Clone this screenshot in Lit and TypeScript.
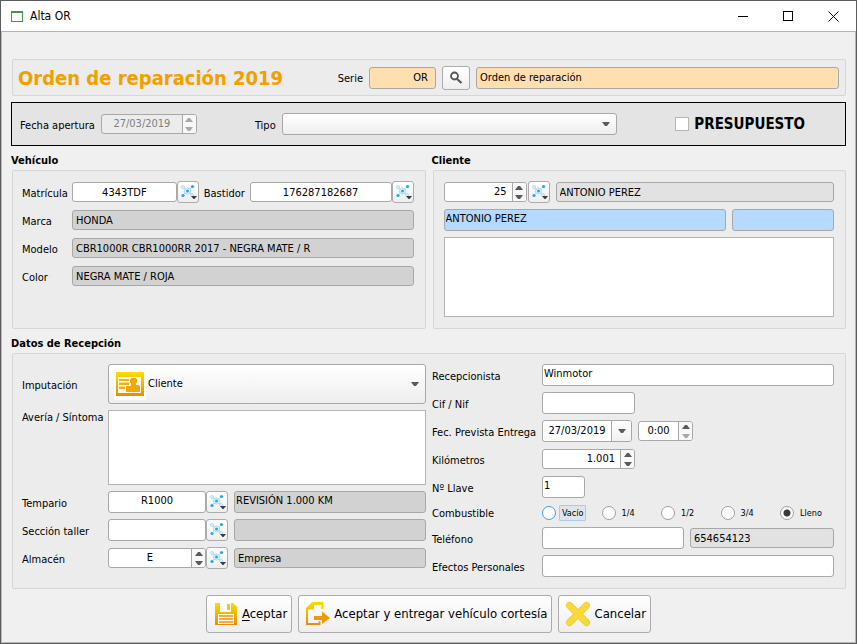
import { LitElement, html, css, svg, nothing } from "lit";
import { customElement, state } from "lit/decorators.js";
import { classMap } from "lit/directives/class-map.js";

const arrowUp = html`<svg class="tri" viewBox="0 0 8 4" aria-hidden="true"><path d="M0 4 L3 0 H5 L8 4 Z" /></svg>`;
const arrowDown = html`<svg class="tri" viewBox="0 0 8 4" aria-hidden="true"><path d="M0 0 H8 L5 4 H3 Z" /></svg>`;

const netIcon = html`<svg class="net" viewBox="0 0 20 20" aria-hidden="true">
  <g fill="none" stroke="#a4daf5" stroke-width="1">
    <path d="M5 5 L14 13 M14 5 L5 13" />
    <circle cx="5" cy="5" r="1.4" fill="#fff" />
    <circle cx="14" cy="13" r="1.4" fill="#fff" />
    <circle cx="9.5" cy="9" r="3" fill="#e4f5fd" />
  </g>
  <g fill="#22aaea">
    <circle cx="9.5" cy="9" r="1.5" />
    <circle cx="14.5" cy="4.5" r="1.6" />
    <circle cx="5" cy="13.5" r="1.6" />
  </g>
  <path d="M13 14 H19 L16.500 17 H15.500 Z" fill="#3c3c3c" />
</svg>`;

const gradient = (id: string) => svg`<linearGradient id=${id} x1="0" y1="0" x2="0" y2="1">
  <stop offset="0" stop-color="#fbdd00" /><stop offset="1" stop-color="#e88a0c" /></linearGradient>`;

const cardIcon = html`<svg class="card-icon" viewBox="0 0 32 32" aria-hidden="true">
  <defs>${gradient("g-card")}</defs>
  <rect width="32" height="32" fill="#fff" />
  <rect x="2" y="4" width="28" height="24" fill="url(#g-card)" />
  <rect x="4" y="9" width="23" height="16" fill="#fffbe6" />
  <path d="M5 11 H15 V13 H5 Z M5 14.500 H15 V17 H5 Z M5 18.500 H11 V21 H5 Z" fill="#efb31a" />
  <path d="M17 10 H22 V11 H23 V15 H22 V17 H25 V18 H26 V24 H12 V18 H17 V15 H16 V11 H17 Z" fill="#f0a812" />
</svg>`;

const saveIcon = html`<svg class="act-icon" viewBox="0 0 26 26" aria-hidden="true">
  <defs>${gradient("g-save")}</defs>
  <path d="M2 2 H7 V11 H18 V2 H20 L24 6 V24 H2 Z" fill="url(#g-save)" />
  <path d="M14 3 H17 V9 H14 Z" fill="#f7c80a" />
  <path d="M5 13 H21 V23 H5 Z" fill="#fffdf2" />
  <path d="M6 14 H20 V16 H6 Z M6 17 H20 V19 H6 Z M6 20 H20 V22 H6 Z" fill="#f0ab3a" />
</svg>`;

const exportIcon = html`<svg class="act-icon" viewBox="0 0 26 26" aria-hidden="true">
  <defs>${gradient("g-exp")}</defs>
  <path fill="url(#g-exp)"
    d="M7 1 H18.500 V8 H16.500 V4 H9 V8.500 H3 V22 H13.500 V20.500 H15.500 V24 H1 V7 Z" />
  <path d="M9 15 H17 V10.500 L25 17 L17 23 V19 H9 Z" fill="#eb9a0c" />
</svg>`;

const crossIcon = html`<svg class="act-icon" viewBox="0 0 26 26" aria-hidden="true">
  <path d="M4.500 4.500 L21.500 21.500 M21.500 4.500 L4.500 21.500" stroke="#e6c436" stroke-width="7" stroke-linecap="round" />
  <path d="M4.500 4.500 L21.500 21.500 M21.500 4.500 L4.500 21.500" stroke="#fad83c" stroke-width="6" stroke-linecap="round" />
</svg>`;

@customElement("app-root")
export class AppRoot extends LitElement {
  @state() private fuel = "Lleno";

  static styles = css`
    :host {
      display: block;
      font-family: "DejaVu Sans Condensed", "DejaVu Sans", sans-serif;
      font-size: 11px;
      line-height: 14px;
      color: #000;
    }
    *, *::before, *::after { box-sizing: border-box; }
    .window {
      min-height: 100vh;
      border: 1px solid #5c5c5c;
      background: #f0f0f0;
      display: flex;
      flex-direction: column;
    }
    .titlebar {
      height: 31px;
      background: #fff;
      border-bottom: 1px solid #b4b4b4;
      display: flex;
      align-items: center;
      padding-left: 10px;
    }
    .titlebar h1 { margin: 0 0 0 7px; flex: 1; font-size: 12px; font-weight: 400; }
    .app-icon { width: 12px; height: 11px; }
    .caption {
      width: 45px; height: 30px; padding: 0; border: 0; background: none;
      display: grid; place-items: center;
    }
    .caption svg { width: 11px; height: 11px; }
    .content {
      flex: 1;
      border: solid #b8b8b8;
      border-width: 0 1px 1px;
      padding: 27px 9px 9px;
    }
    input, select, textarea, button { font: inherit; color: inherit; margin: 0; }
    input:focus, select:focus, textarea:focus { outline: 1px solid #5fb0ee; }
    label, .lbl { padding-top: 4px; white-space: nowrap; }

    .panel {
      border: 1px solid #d6d6d6;
      border-radius: 2px;
      background: #ececec;
      margin-left: 1px;
    }
    .head {
      display: grid;
      grid-template-columns: 314px 25px 67px 28px 1fr;
      column-gap: 6px;
      align-items: center;
      height: 37px;
      padding: 0 6px 0 5px;
    }
    .head h2 { margin: 0; color: #f0a000; font-size: 20px; line-height: 26px; font-weight: 700; white-space: nowrap; }
    .head label { justify-self: end; padding-top: 2px; }
    .filter {
      margin-top: 6px;
      height: 44px;
      border: 1px solid #000;
      background: #e4e4e4;
      display: flex;
      align-items: center;
      padding: 0 40px 0 8px;
    }
    .filter .spin { width: 96px; margin-left: 6px; margin-right: 58px; }
    .filter .combo { flex: 1; margin-left: 6px; }
    .check { display: flex; align-items: center; gap: 5px; padding: 0; margin-left: 58px; font-size: 15px; line-height: 18px; font-weight: 700; }
    .check input { appearance: none; width: 14px; height: 14px; border: 1px solid #b6b6b6; background: #fff; }
    .check input:checked { background: #444; }

    .section { margin: 0; height: 24px; padding: 7px 0 0; font-size: 11px; line-height: 16px; font-weight: 700; }
    .pair { display: grid; grid-template-columns: 1fr 1fr; column-gap: 6px; }
    .col { display: flex; flex-direction: column; }
    .col .panel { flex: 1; }
    .form { padding: 10px 11px 11px 9px; display: grid; row-gap: 6px; align-content: start; }
    .form.client { padding-left: 10px; }
    .row { display: grid; align-items: center; height: 22px; }
    .row.short { height: 17px; }
    .row.short .lbl { padding-top: 2px; }
    .row.tall { height: 40px; }
    .row.area { height: 75px; align-items: start; }
    .row.area label { padding-top: 1px; }
    .vehicle .row { grid-template-columns: 50px 1fr; }
    .vehicle .row.ids { grid-template-columns: 50px 105fr 22px 51px 142fr 22px; }
    .vehicle .row.ids label { justify-self: center; }
    .vehicle .row.ids label:first-child { justify-self: start; }
    .client .row.who { grid-template-columns: 83px 23px 1fr; }
    .client .row.who .look { justify-self: end; }
    .client .row.who .field { margin-left: 6px; width: auto; }
    .client .row.names { grid-template-columns: 282fr 102fr; column-gap: 6px; }
    .client textarea { height: 80px; }
    .reception { grid-template-columns: 404fr 402fr; padding: 10px 11px 11px 9px; }
    .sub { display: grid; row-gap: 6px; align-content: start; }
    .left .row { grid-template-columns: 86px 1fr; }
    .left .row.lookup { grid-template-columns: 86px 98px 22px 1fr; }
    .left .row.lookup .last { margin-left: 6px; width: auto; }
    .right .row { grid-template-columns: 110px 1fr; }
    .right .fields { display: flex; align-items: center; gap: 6px; }

    .field {
      width: 100%;
      min-width: 0;
      height: 20px;
      border: 1px solid #a8a8a8;
      border-radius: 3px;
      background: #fff;
      padding: 0 3px;
    }
    .field.full { height: 22px; }
    .field.rich { height: 22px; padding: 0 1px 4px; }
    .field.mid { text-align: center; }
    .field.dark { background: #d2d2d2; }
    .field.grey { background: #e2e2e2; }
    .field.blue { background: #b4daff; }
    .field.peach { height: 22px; background: #ffdfb0; }
    .field.end { text-align: right; padding-right: 7px; }
    .w93 { width: 93px; }
    .w43 { width: 43px; }
    textarea {
      display: block;
      width: 100%;
      height: 100%;
      border: 1px solid #b4b4b4;
      border-radius: 0;
      background: #fff;
      padding: 2px;
      resize: none;
    }

    .spin {
      display: flex;
      height: 20px;
      border: 1px solid #a8a8a8;
      border-radius: 3px;
      background: #fff;
      overflow: hidden;
    }
    .spin input { flex: 1; min-width: 0; width: 0; border: 0; background: none; padding: 0 5px; }
    .spin .mid { text-align: center; padding: 0 2px; }
    .spin .num { text-align: right; }
    .spin .steps { width: 14px; border-left: 1px solid #a8a8a8; background: #f8f8f8; display: grid; grid-template-rows: 1fr 1fr; }
    .steps button { border: 0; background: none; padding: 0; display: grid; place-items: center; color: #5a5a5a; }
    .steps button:disabled { color: #a8a8a8; }
    .spin.off { background: #ececec; color: #808080; }
    .tri { display: block; width: 8px; height: 4px; fill: currentColor; }
    .w55 { width: 55px; }
    .date { height: 22px; width: 90px; }
    .drop { width: 20px; border: 0; border-left: 1px solid #a8a8a8; padding: 0; background: linear-gradient(#fff, #f0f0f0); display: grid; place-items: center; color: #5a5a5a; }

    .btn {
      border: 1px solid #acacac;
      border-radius: 3px;
      background: linear-gradient(#fff, #eee);
      padding: 0;
      display: grid;
      place-items: center;
    }
    .btn.look { width: 22px; height: 22px; }
    .btn.find { width: 28px; height: 24px; }
    .net { display: block; width: 20px; height: 20px; }
    .find svg { width: 14px; height: 14px; }

    .combo { position: relative; display: block; }
    .combo select {
      appearance: none;
      display: block;
      width: 100%;
      height: 22px;
      border: 1px solid #a8a8a8;
      border-radius: 3px;
      background: linear-gradient(#fff, #eee);
      padding: 0 24px 0 6px;
    }
    .combo .tri { position: absolute; right: 7px; top: 50%; margin-top: -2px; color: #5a5a5a; pointer-events: none; }
    .combo.big select { height: 40px; padding-left: 39px; }
    .card-icon { position: absolute; left: 6px; top: 4px; width: 32px; height: 32px; pointer-events: none; }

    .radios { display: grid; grid-template-columns: repeat(4, 1fr) 54px; align-items: center; }
    .radio { display: flex; align-items: center; gap: 3px; padding: 0; font-size: 9px; line-height: 14px; }
    .radio input { appearance: none; width: 14px; height: 14px; border: 1px solid #a0a0a0; border-radius: 50%; background: #fff; }
    .radio input:checked { background: radial-gradient(circle, #3a3a3a 0 3px, #fff 4px); }
    .radio span { border: 1px solid transparent; padding: 0 2px; }
    .radio.hot input { border-color: #3aa0f0; }
    .radio.hot span { border-color: #a4cbea; background: #dde6ee; border-radius: 1px; }

    .actions { display: flex; justify-content: center; gap: 6px; margin-top: 6px; }
    .action {
      height: 38px;
      display: flex;
      align-items: center;
      gap: 3px;
      padding: 0 4px 0 6px;
      font-size: 13px;
      white-space: nowrap;
    }
    .action u { text-underline-offset: 2px; }
    .act-icon { width: 26px; height: 26px; fill: none; }
  `;

  private look(name: string) {
    return html`<button class="btn look" aria-label=${name}>${netIcon}</button>`;
  }

  private steps(name: string, up = false, down = false) {
    return html`<span class="steps">
      <button aria-label=${`Aumentar ${name}`} ?disabled=${up}>${arrowUp}</button>
      <button aria-label=${`Reducir ${name}`} ?disabled=${down}>${arrowDown}</button>
    </span>`;
  }

  private readonlyRow(id: string, label: string, value: string) {
    return html`<div class="row">
      <label for=${id}>${label}</label>
      <input class="field dark" id=${id} readonly .value=${value} />
    </div>`;
  }

  private renderVehicle() {
    return html`<div class="panel form vehicle">
      <div class="row ids">
        <label for="plate">Matrícula</label>
        <input class="field mid" id="plate" .value=${"4343TDF"} />
        ${this.look("Buscar matrícula")}
        <label for="frame">Bastidor</label>
        <input class="field mid" id="frame" .value=${"176287182687"} />
        ${this.look("Buscar bastidor")}
      </div>
      ${this.readonlyRow("brand", "Marca", "HONDA")}
      ${this.readonlyRow("model", "Modelo", "CBR1000R CBR1000RR 2017 - NEGRA MATE / R")}
      ${this.readonlyRow("color", "Color", "NEGRA MATE / ROJA")}
    </div>`;
  }

  private renderClient() {
    return html`<div class="panel form client">
      <div class="row who">
        <span class="spin"><input class="num" aria-label="Código de cliente" .value=${"25"} />${this.steps("cliente")}</span>
        ${this.look("Buscar cliente")}
        <input class="field grey" aria-label="Nombre de cliente" readonly .value=${"ANTONIO PEREZ"} />
      </div>
      <div class="row names">
        <input class="field rich blue" aria-label="Contacto" .value=${"ANTONIO PEREZ"} />
        <input class="field rich blue" aria-label="Teléfono de contacto" />
      </div>
      <textarea aria-label="Notas de cliente"></textarea>
    </div>`;
  }

  private renderLeft() {
    return html`<div class="sub left">
      <div class="row tall">
        <label for="charge">Imputación</label>
        <span class="combo big">
          <select id="charge"><option>Cliente</option></select>
          ${cardIcon}${arrowDown}
        </span>
      </div>
      <div class="row area">
        <label for="fault">Avería / Síntoma</label>
        <textarea id="fault"></textarea>
      </div>
      <div class="row lookup">
        <label for="job">Tempario</label>
        <input class="field rich mid" id="job" .value=${"R1000"} />
        ${this.look("Buscar tempario")}
        <input class="field rich dark last" aria-label="Descripción de tempario" readonly .value=${"REVISIÓN 1.000 KM"} />
      </div>
      <div class="row lookup">
        <label for="shop">Sección taller</label>
        <input class="field rich mid" id="shop" />
        ${this.look("Buscar sección")}
        <input class="field full dark last" aria-label="Descripción de sección" readonly />
      </div>
      <div class="row lookup">
        <label for="store">Almacén</label>
        <span class="spin"><input class="mid" id="store" .value=${"E"} />${this.steps("almacén")}</span>
        ${this.look("Buscar almacén")}
        <input class="field dark last" aria-label="Nombre de almacén" readonly .value=${"Empresa"} />
      </div>
    </div>`;
  }

  private renderRight() {
    const levels = ["Vacío", "1/4", "1/2", "3/4", "Lleno"];
    return html`<div class="sub right">
      <div class="row">
        <label for="clerk">Recepcionista</label>
        <input class="field rich" id="clerk" .value=${"Winmotor"} />
      </div>
      <div class="row">
        <label for="nif">Cif / Nif</label>
        <input class="field rich w93" id="nif" />
      </div>
      <div class="row">
        <label for="due">Fec. Prevista Entrega</label>
        <div class="fields">
          <span class="spin date"><input class="mid" id="due" .value=${"27/03/2019"} /><button class="drop" aria-label="Abrir calendario">${arrowDown}</button></span>
          <span class="spin w55"><input class="mid" aria-label="Hora prevista" .value=${"0:00"} />${this.steps("hora", false, true)}</span>
        </div>
      </div>
      <div class="row">
        <label for="km">Kilómetros</label>
        <span class="spin w93"><input class="num" id="km" .value=${"1.001"} />${this.steps("kilómetros")}</span>
      </div>
      <div class="row">
        <label for="key">Nº Llave</label>
        <input class="field rich w43" id="key" .value=${"1"} />
      </div>
      <div class="row short" role="radiogroup" aria-labelledby="fuel">
        <span class="lbl" id="fuel">Combustible</span>
        <div class="radios">
          ${levels.map((l) => html`<label class=${classMap({ radio: true, hot: l === "Vacío" })}>
            <input type="radio" name="fuel" .checked=${this.fuel === l} @change=${() => (this.fuel = l)} /><span>${l}</span>
          </label>`)}
        </div>
      </div>
      <div class="row">
        <label for="phone">Teléfono</label>
        <div class="fields">
          <input class="field rich" id="phone" />
          <input class="field grey" aria-label="Teléfono móvil" readonly .value=${"654654123"} />
        </div>
      </div>
      <div class="row">
        <label for="goods">Efectos Personales</label>
        <input class="field rich" id="goods" />
      </div>
    </div>`;
  }

  private action(icon: unknown, first: string, rest: string) {
    return html`<button class="btn action">${icon}<span>${first ? html`<u>${first}</u>` : nothing}${rest}</span></button>`;
  }

  render() {
    return html`<div class="window">
      <header class="titlebar">
        <svg class="app-icon" viewBox="0 0 12 11" aria-hidden="true">
          <rect x="0.500" y="0.500" width="11" height="10" fill="#fff" stroke="#3f9a48" />
          <rect width="12" height="2" fill="#3f9a48" />
        </svg>
        <h1>Alta OR</h1>
        <button class="caption" aria-label="Minimizar"><svg viewBox="0 0 11 11"><path d="M0 5.500 H10" stroke="#000" /></svg></button>
        <button class="caption" aria-label="Maximizar"><svg viewBox="0 0 11 11"><rect x="0.500" y="0.500" width="9" height="9" fill="none" stroke="#000" /></svg></button>
        <button class="caption" aria-label="Cerrar"><svg viewBox="0 0 11 11"><path d="M0.500 0.500 L10.500 10.500 M10.500 0.500 L0.500 10.500" stroke="#000" /></svg></button>
      </header>
      <main class="content">
        <div class="panel head">
          <h2>Orden de reparación 2019</h2>
          <label for="series">Serie</label>
          <input class="field peach end" id="series" .value=${"OR"} />
          <button class="btn find" aria-label="Buscar serie">
            <svg viewBox="0 0 14 14"><circle cx="5.500" cy="5" r="3.500" fill="none" stroke="#555" stroke-width="1.800" /><path d="M8 8 L12.500 12" stroke="#555" stroke-width="2.200" /></svg>
          </button>
          <input class="field peach" aria-label="Descripción de serie" readonly .value=${"Orden de reparación"} />
        </div>
        <div class="filter">
          <label for="opened">Fecha apertura</label>
          <span class="spin off"><input class="mid" id="opened" disabled .value=${"27/03/2019"} />${this.steps("fecha", true, true)}</span>
          <label for="kind">Tipo</label>
          <span class="combo"><select id="kind"><option></option></select>${arrowDown}</span>
          <label class="check"><input type="checkbox" />PRESUPUESTO</label>
        </div>
        <div class="pair">
          <section class="col"><h3 class="section">Vehículo</h3>${this.renderVehicle()}</section>
          <section class="col"><h3 class="section">Cliente</h3>${this.renderClient()}</section>
        </div>
        <section>
          <h3 class="section">Datos de Recepción</h3>
          <div class="panel pair reception">${this.renderLeft()}${this.renderRight()}</div>
        </section>
        <div class="actions">
          ${this.action(saveIcon, "A", "ceptar")}
          ${this.action(exportIcon, "", "Aceptar y entregar vehículo cortesía")}
          ${this.action(crossIcon, "", "Cancelar")}
        </div>
      </main>
    </div>`;
  }
}
